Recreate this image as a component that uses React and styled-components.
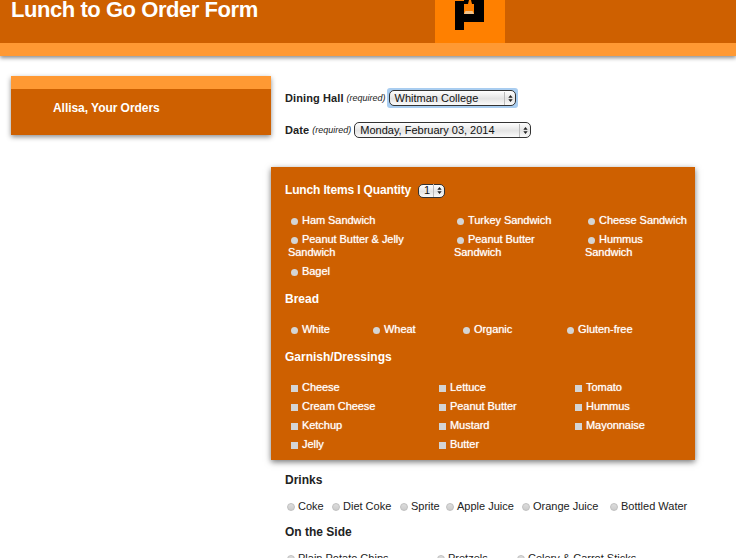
import styled, { createGlobalStyle } from 'styled-components';

const GlobalStyle = createGlobalStyle`
  html, body {
    margin: 0;
    padding: 0;
    height: 558px;
    overflow: hidden;
    background: #fff;
    font-family: "Liberation Sans", Arial, sans-serif;
  }
`;

const sandwiches = ['Ham Sandwich', 'Turkey Sandwich', 'Cheese Sandwich', 'Peanut Butter & Jelly Sandwich', 'Peanut Butter Sandwich', 'Hummus Sandwich', 'Bagel'];
const breads = ['White', 'Wheat', 'Organic', 'Gluten-free'];
const garnishes = ['Cheese', 'Lettuce', 'Tomato', 'Cream Cheese', 'Peanut Butter', 'Hummus', 'Ketchup', 'Mustard', 'Mayonnaise', 'Jelly', 'Butter'];
const drinks = ['Coke', 'Diet Coke', 'Sprite', 'Apple Juice', 'Orange Juice', 'Bottled Water'];
const sides = ['Plain Potato Chips', 'Pretzels', 'Celery & Carrot Sticks'];

function SelectArrows() {
  return (
    <Arrows viewBox="0 0 7 11" aria-hidden="true">
      <path d="M3.5 0.5 L6.5 4.5 H0.5 Z M3.5 10.5 L0.5 6.5 H6.5 Z" fill="#222" />
    </Arrows>
  );
}

function Logo() {
  return (
    <svg width="32" height="31" viewBox="0 0 32 31" aria-hidden="true">
      <path d="M1 1 H10 V0 H30 V22 H10 V30 H1 Z" fill="#000" />
      <path d="M10 4 H14 L15 0 H17 L18 4 H20 V14 H10 Z" fill="#ff8000" />
      <path d="M11.500 11 H18.500 L20 14 H10 Z" fill="#f0c48c" />
    </svg>
  );
}

export default function App() {
  return (
    <>
      <GlobalStyle />
      <Header>
        <Title>Lunch to Go Order Form</Title>
        <LogoTile>
          <Logo />
        </LogoTile>
      </Header>
      <Page>
        <Sidebar>
          <SidebarLink>Allisa, Your Orders</SidebarLink>
        </Sidebar>
        <Main>
          <FieldList>
            <Field>
              <FieldLabel>Dining Hall</FieldLabel> <Required>(required)</Required>
              <FocusRing>
                <Select $width={127}>
                  <span>Whitman College</span>
                  <SelectArrows />
                </Select>
              </FocusRing>
            </Field>
            <Field>
              <FieldLabel>Date</FieldLabel> <Required>(required)</Required>
              <Select $width={177}>
                <span>Monday, February 03, 2014</span>
                <SelectArrows />
              </Select>
            </Field>
          </FieldList>

          <Panel>
            <QuantityRow>
              <QuantityHeading>Lunch Items I Quantity</QuantityHeading>
              <Select $width={27} $small>
                <span>1</span>
                <SelectArrows />
              </Select>
            </QuantityRow>
            <OptionGrid $columns="166px 131px 105px" $marginTop={16}>
              {sandwiches.map((name) => (
                <Option key={name}>
                  <Radio type="radio" name="lunch" />
                  {name}
                </Option>
              ))}
            </OptionGrid>

            <PanelHeading $marginTop={14}>Bread</PanelHeading>
            <OptionGrid $columns="82px 90px 104px 110px" $marginTop={17}>
              {breads.map((name) => (
                <Option key={name}>
                  <Radio type="radio" name="bread" />
                  {name}
                </Option>
              ))}
            </OptionGrid>

            <PanelHeading $marginTop={14}>Garnish/Dressings</PanelHeading>
            <OptionGrid $columns="148px 136px 120px" $marginTop={17}>
              {garnishes.map((name) => (
                <Option key={name}>
                  <Checkbox type="checkbox" />
                  {name}
                </Option>
              ))}
            </OptionGrid>
          </Panel>

          <Section>
            <DarkHeading>Drinks</DarkHeading>
            <DarkGrid $columns="45px 68px 46px 76px 88px 90px" $marginTop={13}>
              {drinks.map((name) => (
                <DarkOption key={name}>
                  <DarkRadio type="radio" name="drink" />
                  {name}
                </DarkOption>
              ))}
            </DarkGrid>
            <DarkHeading $marginTop={12}>On the Side</DarkHeading>
            <DarkGrid $columns="150px 80px 180px" $marginTop={13}>
              {sides.map((name) => (
                <DarkOption key={name}>
                  <DarkRadio type="radio" name="side" />
                  {name}
                </DarkOption>
              ))}
            </DarkGrid>
          </Section>
        </Main>
      </Page>
    </>
  );
}

const Header = styled.header`
  position: relative;
  height: 43px;
  background: #ce6000;
  border-bottom: 13px solid #ff9933;
  box-shadow: 0 2px 4px rgba(0, 0, 0, 0.45);
  display: flex;
  padding-left: 11px;
`;

const Title = styled.h1`
  flex: 0 0 424px;
  margin: -3px 0 0;
  font-size: 22px;
  line-height: 26px;
  font-weight: 700;
  letter-spacing: -0.45px;
  color: #fff;
  white-space: nowrap;
`;

const LogoTile = styled.div`
  width: 70px;
  height: 43px;
  background: #ff8000;
  display: flex;
  justify-content: center;
`;

const Page = styled.div`
  display: flex;
  align-items: flex-start;
  padding: 20px 0 0 11px;
`;

const Sidebar = styled.aside`
  width: 260px;
  height: 46px;
  background: #ce6000;
  border-top: 13px solid #ff9933;
  box-shadow: 0 2px 5px rgba(0, 0, 0, 0.45);
`;

const SidebarLink = styled.div`
  padding: 12px 0 0 42px;
  font-size: 12px;
  line-height: 14px;
  font-weight: 700;
  letter-spacing: -0.05px;
  color: #fff;
`;

const Main = styled.main`
  width: 424px;
`;

const FieldList = styled.div`
  display: flex;
  flex-direction: column;
  gap: 12px;
  padding: 12px 0 0 14px;
`;

const Field = styled.div`
  display: flex;
  align-items: center;
  gap: 3px;
  height: 20px;
  color: #222;
  white-space: nowrap;
`;

const FieldLabel = styled.span`
  font-size: 11px;
  font-weight: 700;
  letter-spacing: 0.1px;
`;

const Required = styled.em`
  font-size: 9px;
`;

const FocusRing = styled.div`
  display: flex;
  margin-left: -2px;
  padding: 2px;
  background: #a9cdf0;
  border-radius: 3px;
`;

const Select = styled.div`
  box-sizing: border-box;
  width: ${(p) => p.$width}px;
  height: ${(p) => (p.$small ? 14 : 16)}px;
  display: flex;
  align-items: center;
  justify-content: space-between;
  padding-left: 5px;
  border: 1px solid #333;
  border-radius: 5px;
  background: linear-gradient(#fff, #e4e4e4 55%, #fafafa);
  font-size: 11px;
  line-height: 13px;
  color: #111;
  white-space: nowrap;
`;

const Arrows = styled.svg`
  box-sizing: content-box;
  flex: none;
  width: 5px;
  height: 9px;
  padding: 2px 2px 2px 3px;
  border-left: 1px solid #bbb;
`;

const Panel = styled.section`
  box-sizing: border-box;
  height: 293px;
  margin-top: 27px;
  padding: 16px 0 0 14px;
  background: #ce6000;
  box-shadow: 0 2px 6px rgba(0, 0, 0, 0.55);
  color: #fff;
`;

const QuantityRow = styled.div`
  display: flex;
  align-items: center;
  gap: 7px;
  height: 15px;
`;

const PanelHeading = styled.h2`
  margin: ${(p) => p.$marginTop || 0}px 0 0;
  font-size: 12px;
  line-height: 14px;
  font-weight: 700;
  color: #fff;
`;

const QuantityHeading = styled(PanelHeading)`
  margin-top: -2px;
  letter-spacing: -0.15px;
`;

const OptionGrid = styled.div`
  display: grid;
  grid-template-columns: ${(p) => p.$columns};
  row-gap: 6px;
  margin: ${(p) => p.$marginTop || 0}px 0 0 3px;
`;

const Option = styled.label`
  padding-right: 2px;
  font-size: 11px;
  line-height: 13px;
  letter-spacing: -0.05px;
  color: #fff;
  text-shadow: 0 0 1px rgba(255, 255, 255, 0.8);
`;

const Radio = styled.input`
  appearance: none;
  box-sizing: border-box;
  width: 7px;
  height: 7px;
  margin: 0 4px 0 3px;
  border-radius: 50%;
  background: #d4d4d4;
  vertical-align: -1px;
`;

const Checkbox = styled.input`
  appearance: none;
  box-sizing: border-box;
  width: 7px;
  height: 7px;
  margin: 0 4px 0 3px;
  background: #d4d4d4;
  vertical-align: -1px;
`;

const Section = styled.section`
  padding: 13px 0 0 14px;
`;

const DarkHeading = styled.h3`
  margin: ${(p) => p.$marginTop || 0}px 0 0;
  font-size: 12px;
  line-height: 14px;
  font-weight: 700;
  color: #222;
`;

const DarkGrid = styled.div`
  display: grid;
  grid-template-columns: ${(p) => p.$columns};
  margin: ${(p) => p.$marginTop || 0}px 0 0 2px;
`;

const DarkOption = styled.label`
  font-size: 11px;
  line-height: 13px;
  color: #222;
  white-space: nowrap;
`;

const DarkRadio = styled.input`
  appearance: none;
  box-sizing: border-box;
  width: 8px;
  height: 8px;
  margin: 0 3px 0 0;
  border: 1px solid #c0c0c0;
  border-radius: 50%;
  background: linear-gradient(#ddd, #ccc);
  vertical-align: -1px;
`;
